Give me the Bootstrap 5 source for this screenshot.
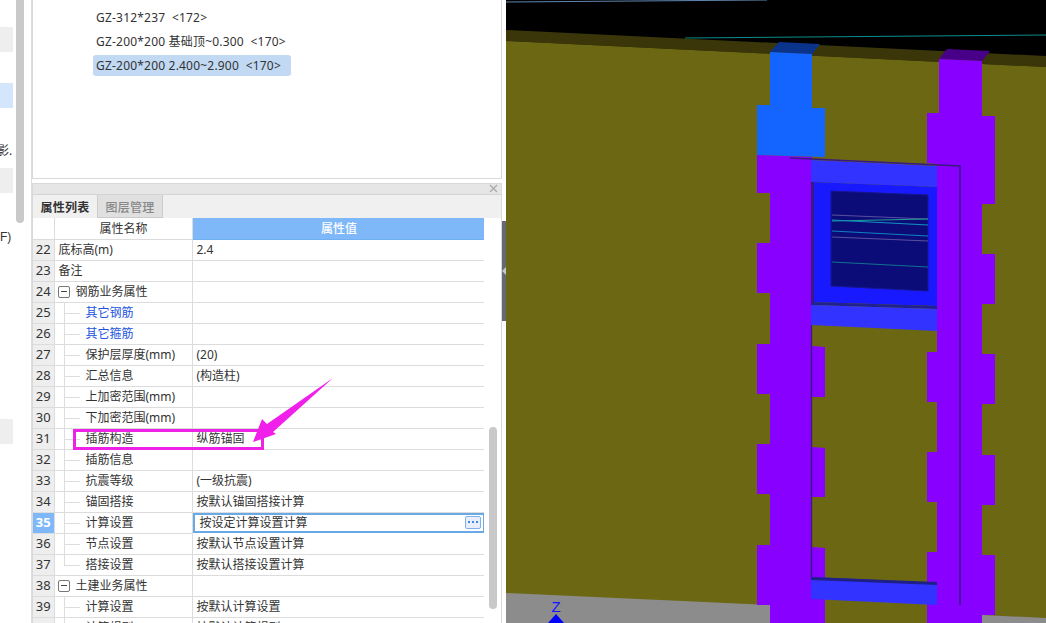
<!DOCTYPE html>
<html lang="en">
<head>
    <meta charset="UTF-8">
    <meta name="viewport" content="width=device-width, initial-scale=1.0">
    <title>Properties</title>
    <link rel="stylesheet" href="https://cdn.jsdelivr.net/npm/bootstrap@5.3.0/dist/css/bootstrap.min.css">
    <style>
        html, body { height: 623px; overflow: hidden; }
        body { font-family: "Liberation Sans", "Noto Sans CJK SC", sans-serif; font-size: 12px; color: #333; background: #fff; position: relative; }
        .cjk-text { font-family: "Noto Sans", "Noto Sans CJK SC", sans-serif; }

        /* left strip */
        .side-strip { width: 32px; border-right: 1px solid #ddd; margin-right: 0; padding-right: 4px; }
        .side-cells { width: 13px; overflow: hidden; white-space: nowrap; }
        .side-cell { height: 25px; background: #eee; }
        .side-cell.is-sel { background: #d3e6fc; }
        .gap-a { margin-top: 27px; }
        .gap-b { margin-top: 31px; }
        .side-text { height: 14px; line-height: 14px; font-size: 12px; }
        .side-text-a { margin-top: 36px; margin-bottom: 10px; margin-left: -3px; }
        .side-text-b { margin-top: 37px; }
        .side-gap-e { margin-top: 175px; }
        .side-scroll { width: 8px; height: 223px; margin-left: 3px; background: #c9c9c9; border-radius: 0 0 4px 4px; }

        /* panels */
        .main-col { width: 470px; }
        .list-panel { height: 179px; border: 1px solid #d9d9d9; border-top: 0; padding: 7px 0 0 60px; margin-bottom: 4px; }
        .tree-item { height: 24px; line-height: 22px; padding-left: 3px; width: fit-content; letter-spacing: .2px; }
        .tree-item.is-sel { background: #c1d9f2; border-radius: 3px; height: 21px; line-height: 21px; margin-top: 0; width: 198px; }
        .title-bar { height: 12px; background: #e6e6e6; border: 1px solid #d9d9d9; border-bottom: 1px solid #d4d4d4; position: relative; }
        .title-x { position: absolute; right: 3px; top: 0; width: 9px; height: 9px; }
        .tab-strip { height: 23px; background: #f0f0f0; border-left: 1px solid #d9d9d9; border-right: 1px solid #d9d9d9; }
        .tab-item { width: 65px; height: 23px; line-height: 25px; text-align: center; font-size: 12px; letter-spacing: .25px; }
        .tab-item.is-on { font-weight: 700; background: #f0f0f0; color: #333; border-right: 1px solid #ccc; }
        .tab-item.is-off { background: #e0e0e0; color: #888; border-right: 1px solid #ccc; border-bottom: 1px solid #ccc; font-weight: 500; }

        .grid-area { height: 405px; border-left: 1px solid #d9d9d9; border-right: 1px solid #d9d9d9; }
        .grid-wrap { width: 452px; overflow: hidden; }
        .prop-table.table { table-layout: fixed; width: 452px; border-collapse: collapse; margin: 0; border-color: #dcdcdc; color: #333; }
        .prop-table.table > * > tr > * { height: 21px; padding: 0 3px 0 4px; line-height: 19px; font-size: 12px; font-weight: 400; white-space: nowrap; border: 1px solid #dcdcdc; border-top: 0; background: #fff; color: #333; box-shadow: none; vertical-align: middle; }
        .prop-table.table > tbody > tr > .name-cell { padding-left: 4px; }
        .prop-table.table > * > tr > .num-cell { background: #eee; text-align: center; padding: 0; font-size: 13px; border-left: 0; }
        .prop-table.table > thead > tr > .num-cell { background: #fff; }
        .prop-table.table > thead > tr > .head-name { text-align: center; }
        .prop-table.table > thead > tr > .head-val { text-align: center; background: #7eb8f8; color: #fff; font-weight: 500; border-color: #6fb0f2; }
        .prop-table.table > tbody > tr > .num-on { background: #7eb8f8; color: #fff; font-weight: 700; }
        .prop-table.table > tbody > tr > .val-edit { box-shadow: inset 0 0 0 2px #69a9e6; border: 0; padding-left: 7px; position: relative; }
        .prop-table.table > tbody > tr > .tree-cell { position: relative; padding-left: 31px; }
        .prop-table.table > tbody > tr > .group-cell { padding-left: 3px; }
        .prop-table.table > tbody > tr > .link-cell { color: #2255dd; }
        .tree-cell::before { content: ""; position: absolute; left: 9px; top: -1px; bottom: 0; border-left: 1px solid #ddd; }
        .tree-cell::after { content: ""; position: absolute; left: 9px; top: 10px; width: 16px; border-top: 1px solid #ddd; }
        .tree-cell.is-last::before { bottom: 10px; }
        .fold-box { display: inline-block; width: 12px; height: 12px; border: 1px solid #777; border-radius: 2px; position: relative; vertical-align: -2px; margin-right: 6px; background: #fff; }
        .fold-box::after { content: ""; position: absolute; left: 2px; right: 2px; top: 4px; border-top: 1px solid #444; }
        .more-btn { position: absolute; right: 4px; top: 3px; width: 16px; height: 13px; background: #e9eefa; border: 1px solid #7fb2e8; border-radius: 2px; display: flex; align-items: center; justify-content: center; gap: 2px; padding: 0; }
        .more-btn i { width: 2px; height: 2px; background: #3d8be0; display: block; }
        .grid-scroll { width: 17px; padding: 209px 0 0 5px; border-left: 0; }
        .grid-thumb { width: 8px; height: 182px; background: #c9c9c9; border-radius: 4px 4px 4px 4px; }

        /* splitter */
        .split-col { width: 4px; background: #fff; }
        .split-grip { height: 100px; margin-top: 221px; background: #656a72; display: flex; align-items: center; }
        .split-tri { border-right: 4px solid #c8c8c8; border-top: 4px solid transparent; border-bottom: 4px solid transparent; }

        .scene-box { width: 540px; height: 623px; }
        .scene-box svg { display: block; }
        .overlay-mark { position: absolute; left: 0; top: 0; width: 506px; height: 623px; pointer-events: none; }
    </style>
</head>
<body>
    <div class="d-flex">
        <!-- left strip -->
        <div class="side-strip d-flex flex-shrink-0">
            <div class="side-cells">
                <div class="side-cell gap-a"></div>
                <div class="side-cell is-sel gap-b"></div>
                <div class="side-text side-text-a cjk-text">影.</div>
                <div class="side-cell"></div>
                <div class="side-text side-text-b">F)</div>
                <div class="side-cell side-gap-e"></div>
            </div>
            <div class="side-scroll"></div>
        </div>

        <div class="main-col flex-shrink-0">
            <!-- Tree list -->
            <div class="list-panel cjk-text">
                <div class="tree-item">GZ-312*237&nbsp; &lt;172&gt;</div>
                <div class="tree-item">GZ-200*200 基础顶~0.300&nbsp; &lt;170&gt;</div>
                <div class="tree-item is-sel">GZ-200*200 2.400~2.900&nbsp; &lt;170&gt;</div>
            </div>

            <div class="title-bar">
                <svg class="title-x" viewBox="0 0 9 9"><path d="M1 1l7 7M8 1l-7 7" stroke="#aaa" stroke-width="1.3" fill="none"/></svg>
            </div>
            <div class="tab-strip d-flex cjk-text">
                <div class="tab-item is-on">属性列表</div>
                <div class="tab-item is-off">图层管理</div>
            </div>

            <!-- Property grid -->
            <div class="grid-area d-flex cjk-text">
                <div class="grid-wrap">
                    <table class="table prop-table">
                        <colgroup><col style="width:21px"><col style="width:138px"><col style="width:293px"></colgroup>
                        <thead>
                            <tr><th class="num-cell"></th><th class="head-name">属性名称</th><th class="head-val">属性值</th></tr>
                        </thead>
                        <tbody id="propRows"></tbody>
                    </table>
                </div>
                <div class="grid-scroll"><div class="grid-thumb"></div></div>
            </div>
        </div>

        <div class="split-col flex-shrink-0">
            <div class="split-grip"><div class="split-tri"></div></div>
        </div>

        <!-- 3D view -->
        <div class="scene-box flex-shrink-0">
            <svg width="540" height="623" viewBox="506 0 540 623" shape-rendering="geometricPrecision">
                <rect x="506" y="0" width="540" height="623" fill="#000"/>
                <path d="M506 2L767 0" stroke="#5f86b0" stroke-width="1" fill="none"/>
                <path d="M685 38L1046 35" stroke="#0a8d8d" stroke-width="1" fill="none"/>
                <polygon points="506,30 1046,56 1046,67 506,41" fill="#3a3609"/>
                <polygon points="506,41 1046,67 1046,623 506,623" fill="#6c6713"/>
                <polygon points="506,593 770,605 770,623 506,623" fill="#8c8c8c"/>
                <polygon points="982,615 1046,618 1046,623 982,623" fill="#8c8c8c"/>

                <polygon points="770,52 779,42 820,44 812,54" fill="#0a348c"/>
                <polygon points="939,59 947,49 990,51 982,61" fill="#480088"/>
                <polygon points="770,52 812,54 812,108 825,108 825,157 757,155 757,105 770,105" fill="#1464ff"/>

                <polygon points="757,155 812,157 812,346 825,347 825,397 812,397 812,447 825,448 825,497 812,497 812,547 825,548 825,623 770,623 770,605 757,605 757,545 770,545 770,494 757,494 757,444 770,444 770,394 757,394 757,344 770,344 770,293 757,293 757,243 770,243 770,193 757,193" fill="#8800ff"/>
                <polygon points="939,59 982,61 982,116 995,116 995,204 982,204 982,254 995,254 995,304 982,304 982,354 995,354 995,404 982,404 982,455 995,455 995,505 982,505 982,555 995,555 995,615 982,615 982,623 927,623 927,552 937,552 937,502 927,502 927,452 937,452 937,402 927,402 927,352 937,352 937,164 927,163 927,113 939,113" fill="#8800ff"/>

                <!-- window opening -->
                <polygon points="811,160 937,166 937,187 811,182" fill="#3333ff"/>
                <polygon points="811,182 937,187 937,306 811,302" fill="#1919ff"/>
                <polygon points="831,191 928,195 928,291 831,286" fill="#0c0c78" stroke="#16168f" stroke-width="1"/>
                <path d="M832 215L928 219" stroke="#5a4ea0" fill="none"/>
                <path d="M832 221L928 219" stroke="#20a090" fill="none"/>
                <path d="M832 220L928 225" stroke="#1090c0" fill="none"/>
                <path d="M832 231L928 236" stroke="#1080c0" fill="none"/>
                <path d="M832 237L928 241" stroke="#5a50a0" fill="none"/>
                <path d="M832 262L928 267" stroke="#107090" fill="none"/>
                <polygon points="811,302 937,306 937,309 811,305" fill="#22228e"/>
                <polygon points="811,305 937,309 937,331 811,325" fill="#3333ff"/>
                <polygon points="811,577 937,583 937,605 811,599" fill="#3333ff"/>
                <polygon points="811,577 937,582 937,585 811,580" fill="#1f1f88"/>
                <path d="M790 158L960 166L960 605" stroke="#3a1a80" stroke-width="1.6" fill="none"/>
                <path d="M812.5 182L812.5 302" stroke="#3a1a80" stroke-width="3" fill="none"/>
                <path d="M811.5 325L811.5 577" stroke="#3a1a80" stroke-width="1.4" fill="none"/>

                <!-- axis -->
                <text x="556" y="612" text-anchor="middle" font-family="Liberation Sans, sans-serif" font-size="15" fill="#1414ff">Z</text>
                <polygon points="556,614 564,623 548,623" fill="#0000ff"/>
            </svg>
        </div>
    </div>

    <!-- annotation over the grid -->
    <svg class="overlay-mark" viewBox="0 0 506 623">
        <rect x="74.5" y="430.5" width="188" height="18" fill="none" stroke="#ee22e6" stroke-width="3"/>
        <polygon points="253,442 262,419 267,424 333,378 273,432 276,434" fill="#f020ea"/>
    </svg>

    <script>
        // row number, name, value, kind
        const rows = [
            [22, "底标高(m)", "2.4", ""],
            [23, "备注", "", ""],
            [24, "钢筋业务属性", "", "group"],
            [25, "其它钢筋", "", "link"],
            [26, "其它箍筋", "", "link"],
            [27, "保护层厚度(mm)", "(20)", "tree"],
            [28, "汇总信息", "(构造柱)", "tree"],
            [29, "上加密范围(mm)", "", "tree"],
            [30, "下加密范围(mm)", "", "tree"],
            [31, "插筋构造", "纵筋锚固", "tree"],
            [32, "插筋信息", "", "tree"],
            [33, "抗震等级", "(一级抗震)", "tree"],
            [34, "锚固搭接", "按默认锚固搭接计算", "tree"],
            [35, "计算设置", "按设定计算设置计算", "edit"],
            [36, "节点设置", "按默认节点设置计算", "tree"],
            [37, "搭接设置", "按默认搭接设置计算", "last"],
            [38, "土建业务属性", "", "group"],
            [39, "计算设置", "按默认计算设置", "tree"],
            [40, "计算规则", "按默认计算规则", "tree"]
        ];

        const tbody = document.getElementById("propRows");
        tbody.innerHTML = rows.map(([num, name, value, kind]) => {
            let nameCell = `<td class="name-cell">${name}</td>`;
            if (kind === "group") nameCell = `<td class="group-cell"><span class="fold-box"></span>${name}</td>`;
            if (kind === "link") nameCell = `<td class="tree-cell link-cell">${name}</td>`;
            if (kind === "tree" || kind === "edit") nameCell = `<td class="tree-cell">${name}</td>`;
            if (kind === "last") nameCell = `<td class="tree-cell is-last">${name}</td>`;
            const valueCell = kind === "edit"
                ? `<td class="val-edit">${value}<span class="more-btn"><i></i><i></i><i></i></span></td>`
                : `<td>${value}</td>`;
            return `<tr><td class="num-cell ${kind === "edit" ? "num-on" : ""}">${num}</td>${nameCell}${valueCell}</tr>`;
        }).join("");
    </script>
    <script src="https://cdn.jsdelivr.net/npm/bootstrap@5.3.0/dist/js/bootstrap.bundle.min.js"></script>
</body>
</html>
